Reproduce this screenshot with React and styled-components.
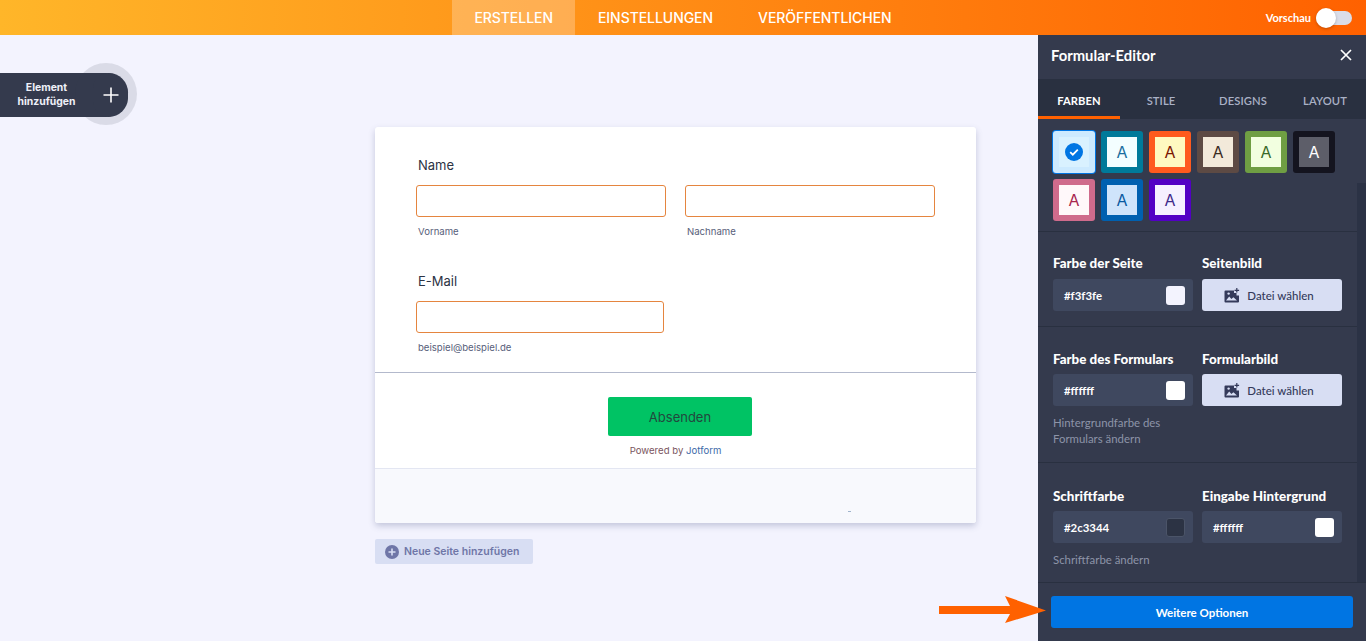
import React from 'react';
import styled, { createGlobalStyle } from 'styled-components';

const GlobalStyle = createGlobalStyle`
  html, body {
    margin: 0;
    padding: 0;
    background: #f3f3fe;
    font-family: "Inter", "Liberation Sans", sans-serif;
  }
  * { box-sizing: border-box; }
`;

const Page = styled.div`
  position: relative;
  width: 1366px;
  height: 641px;
  overflow: hidden;
  display: flex;
  flex-direction: column;
`;

//TOP BAR
const TopBar = styled.header`
  flex: none;
  height: 35px;
  display: grid;
  grid-template-columns: 1fr auto 1fr;
  background: linear-gradient(90deg, #ffb629 0%, #ff6100 100%);
`;
const Nav = styled.nav`
  grid-column: 2;
  display: flex;
`;
const NavTab = styled.a`
  display: flex;
  align-items: center;
  padding: 0 22.5px;
  font-size: 14px;
  font-weight: 500;
  letter-spacing: -0.05px;
  color: #fff;
  background: ${props => props.$active ? 'rgba(255, 255, 255, 0.25)' : 'transparent'};
`;
const PreviewBox = styled.div`
  grid-column: 3;
  justify-self: end;
  display: flex;
  align-items: center;
  gap: 5px;
  padding-right: 14px;
`;
const PreviewLabel = styled.span`
  font-family: "Lato", sans-serif;
  font-size: 11px;
  font-weight: 700;
  color: #fff;
`;
const SwitchTrack = styled.div`
  position: relative;
  width: 36px;
  height: 14px;
  border-radius: 7px;
  background: #dadde8;
`;
const SwitchKnob = styled.div`
  position: absolute;
  left: 0;
  top: -3px;
  width: 20px;
  height: 20px;
  border-radius: 50%;
  background: #fff;
  box-shadow: 0 1px 3px rgba(0, 0, 0, 0.25);
`;

const Main = styled.div`
  flex: 1;
  min-height: 0;
  display: flex;
`;

//CANVAS
const Canvas = styled.main`
  position: relative;
  flex: 1;
  padding: 92px 0 0 375px;
`;
const AddElement = styled.div`
  position: absolute;
  left: 0;
  top: 38px;
  width: 128px;
  height: 44px;
  display: flex;
  border-radius: 0 22px 22px 0;
  background: #343a4d;
`;
const AddLabel = styled.div`
  width: 93px;
  align-self: center;
  text-align: center;
  font-size: 10.4px;
  line-height: 14px;
  font-weight: 700;
  color: #eef0f8;
`;
const AddRing = styled.div`
  position: absolute;
  left: 75px;
  top: -10px;
  width: 62px;
  height: 62px;
  border-radius: 50%;
  background: rgba(52, 58, 77, 0.13);
`;
const AddButton = styled.div`
  position: absolute;
  left: 93px;
  top: 0;
  width: 35px;
  height: 44px;
  display: flex;
  align-items: center;
  justify-content: center;
  border-radius: 18px 22px 22px 18px;
  background: #343a4d;
`;

const FormCard = styled.section`
  width: 601px;
  height: 396px;
  display: flex;
  flex-direction: column;
  border-radius: 3px;
  background: #fff;
  box-shadow: 0 3px 6px rgba(87, 97, 140, 0.3);
`;
const Fields = styled.div`
  height: 246px;
  padding: 29px 0 0 41px;
  border-bottom: 1px solid #b3b9cc;
`;
const FieldLabel = styled.div`
  height: 18px;
  padding-left: 2px;
  font-size: 13px;
  line-height: 18px;
  color: #2c3344;
`;
const FieldRow = styled.div`
  display: flex;
  gap: 19px;
  margin-top: 11px;
  margin-bottom: ${props => props.$last ? '0' : '34px'};
`;
const FieldCol = styled.div`
  width: ${props => props.$width}px;
`;
const TextInput = styled.div`
  height: 32px;
  border: 1px solid #e5853f;
  border-radius: 3px;
  background: #fff;
`;
const SubLabel = styled.div`
  margin-top: 8px;
  padding-left: 2px;
  font-size: 9.6px;
  line-height: 13px;
  color: #57607a;
`;
const SubmitArea = styled.div`
  height: 96px;
  padding-top: 24px;
  display: flex;
  flex-direction: column;
  align-items: center;
  border-bottom: 1px solid #e3e6f2;
`;
const SubmitButton = styled.div`
  width: 144px;
  height: 39px;
  margin-left: 9px;
  display: flex;
  align-items: center;
  justify-content: center;
  border-radius: 2px;
  background: #00c364;
  font-size: 13px;
  color: #22483e;
`;
const Powered = styled.div`
  margin-top: 8px;
  font-size: 9.6px;
  line-height: 13px;
  color: #7a5560;
`;
const PoweredLink = styled.span`
  color: #3e6aa8;
`;
const FormFooter = styled.div`
  position: relative;
  flex: 1;
  border-radius: 0 0 3px 3px;
  background: #f8f9fd;
`;
const Tick = styled.span`
  position: absolute;
  left: 473px;
  top: 42px;
  width: 3px;
  height: 1px;
  background: #a0b4cc;
`;
const NewPage = styled.div`
  width: 158px;
  height: 25px;
  margin-top: 16px;
  display: flex;
  align-items: center;
  gap: 5px;
  padding-left: 10px;
  border-radius: 2px;
  background: #d8def3;
  font-size: 10.5px;
  font-weight: 600;
  color: #6f76a7;
`;

//EDITOR PANEL
const Panel = styled.aside`
  flex: none;
  width: 328px;
  display: flex;
  flex-direction: column;
  background: #343a4d;
  color: #fff;
  font-family: "Lato", "Liberation Sans", sans-serif;
`;
const PanelHead = styled.div`
  flex: none;
  height: 44px;
  display: flex;
  align-items: center;
  justify-content: space-between;
  padding: 0 14px 4px 13px;
  font-size: 14.8px;
  font-weight: 700;
`;
const PanelTabs = styled.div`
  flex: none;
  height: 40px;
  display: grid;
  grid-template-columns: repeat(4, 82px);
  background: #293040;
`;
const PanelTab = styled.div`
  display: flex;
  align-items: center;
  justify-content: center;
  padding-top: 5px;
  font-size: 11.2px;
  font-weight: ${props => props.$active ? 700 : 600};
  letter-spacing: 0.1px;
  color: ${props => props.$active ? '#fff' : '#a9b1c6'};
  border-bottom: 3px solid ${props => props.$active ? '#ff6100' : 'transparent'};
`;
const ScrollArea = styled.div`
  flex: 1;
  min-height: 0;
  display: flex;
  border-bottom: 1px solid #293040;
`;
const Sections = styled.div`
  flex: 1;
`;
const ScrollBar = styled.div`
  flex: none;
  width: 9px;
  background: #2b3245;
`;
const ScrollThumb = styled.div`
  height: 64px;
  background: #343a4d;
`;
const SwatchSection = styled.div`
  height: 113px;
  padding: 12px 0 0 15px;
  display: flex;
  flex-wrap: wrap;
  align-content: flex-start;
  gap: 6px;
  border-bottom: 1px solid #293040;
`;
const Swatch = styled.div`
  width: 42px;
  height: 42px;
  padding: 6px;
  border-radius: 3px;
  background: ${props => props.$frame};
  box-shadow: ${props => props.$selected ? '0 0 0 1px #0075e3' : 'none'};
`;
const SwatchFace = styled.div`
  width: 100%;
  height: 100%;
  display: flex;
  align-items: center;
  justify-content: center;
  background: ${props => props.$face};
  color: ${props => props.$ink};
  font-family: "Inter", sans-serif;
  font-size: 16px;
`;
const OptionLabel = styled.div`
  height: 16px;
  margin-bottom: 8px;
  font-size: 13.4px;
  line-height: 16px;
  font-weight: 900;
  white-space: nowrap;
`;
const Section = styled.div`
  padding: ${props => props.$top || 23}px 15px 15px 15px;
  border-bottom: ${props => props.$last ? 'none' : '1px solid #293040'};

  ${OptionLabel} {
    margin-bottom: ${props => props.$tight ? '7px' : '8px'};
  }
`;
const Grid = styled.div`
  display: grid;
  grid-template-columns: 140px 140px;
  column-gap: 9px;
`;
const ColorField = styled.div`
  height: 32px;
  display: flex;
  align-items: center;
  justify-content: space-between;
  padding: 0 8px 0 11px;
  border-radius: 3px;
  background: #3f485f;
  font-size: 11.4px;
  font-weight: 700;
`;
const ColorChip = styled.span`
  width: 19px;
  height: 19px;
  border-radius: 3px;
  background: ${props => props.$color};
  border: ${props => props.$outlined ? '1px solid #4b5468' : 'none'};
`;
const FileButton = styled.div`
  height: 32px;
  display: flex;
  align-items: center;
  justify-content: center;
  gap: 7px;
  padding-right: 6px;
  border-radius: 3px;
  background: #d8def3;
  font-size: 11.5px;
  font-weight: 500;
  color: #343a5a;
`;
const HelpText = styled.div`
  margin-top: 9px;
  font-size: 11.4px;
  line-height: 16px;
  color: #8d94a8;
`;
const PanelFoot = styled.div`
  flex: none;
  height: 58px;
  padding: 13px 13px 0;
`;
const MoreButton = styled.div`
  height: 32px;
  display: flex;
  align-items: center;
  justify-content: center;
  border-radius: 3px;
  background: #0075e3;
  font-size: 11.5px;
  font-weight: 700;
`;
const Arrow = styled.svg`
  position: absolute;
  left: 939px;
  top: 596px;
`;

const swatches = [
  { frame: '#007a9a', face: '#f3feff', ink: '#1a6ea0' },
  { frame: '#ff5a1e', face: '#fff9c0', ink: '#7a1500' },
  { frame: '#5d4a44', face: '#f2e9da', ink: '#3a2a22' },
  { frame: '#6f9e43', face: '#f2ffe0', ink: '#3a6a2a' },
  { frame: '#14141f', face: '#5d5e69', ink: '#ffffff' },
  { frame: '#cf6b8c', face: '#fff8fa', ink: '#a8254e' },
  { frame: '#0060b0', face: '#cfe4fb', ink: '#0a5aa0' },
  { frame: '#5200c4', face: '#f5f0ff', ink: '#3f2a8a' },
];

const ImageIcon = () => (
  <svg width="16" height="15" viewBox="0 0 16 15">
    <path d="M1.5 2.5H10V5h2.5v2.5H15v6a1 1 0 0 1-1 1H1.5a1 1 0 0 1-1-1v-10a1 1 0 0 1 1-1z" fill="#343a5a" />
    <path d="M2 12.5l3.2-4 2.2 2.4 2-1.6 3.6 3.2z" fill="#d8def3" />
    <circle cx="4.6" cy="5.6" r="1.2" fill="#d8def3" />
    <path d="M12.8 0v4.6M10.5 2.3h4.6" stroke="#343a5a" strokeWidth="1.2" fill="none" />
  </svg>
);

const App = () => (
  <Page>
    <GlobalStyle />
    <TopBar>
      <Nav>
        <NavTab $active>ERSTELLEN</NavTab>
        <NavTab>EINSTELLUNGEN</NavTab>
        <NavTab>VERÖFFENTLICHEN</NavTab>
      </Nav>
      <PreviewBox>
        <PreviewLabel>Vorschau</PreviewLabel>
        <SwitchTrack><SwitchKnob /></SwitchTrack>
      </PreviewBox>
    </TopBar>
    <Main>
      <Canvas>
        <AddElement>
          <AddLabel>Element hinzufügen</AddLabel>
          <AddRing />
          <AddButton>
            <svg width="16" height="16" viewBox="0 0 16 16">
              <path d="M8 .5v15M.5 8h15" stroke="#fff" strokeWidth="1.6" fill="none" />
            </svg>
          </AddButton>
        </AddElement>
        <FormCard>
          <Fields>
            <FieldLabel>Name</FieldLabel>
            <FieldRow>
              <FieldCol $width={250}>
                <TextInput />
                <SubLabel>Vorname</SubLabel>
              </FieldCol>
              <FieldCol $width={250}>
                <TextInput />
                <SubLabel>Nachname</SubLabel>
              </FieldCol>
            </FieldRow>
            <FieldLabel>E-Mail</FieldLabel>
            <FieldRow $last>
              <FieldCol $width={248}>
                <TextInput />
                <SubLabel>beispiel@beispiel.de</SubLabel>
              </FieldCol>
            </FieldRow>
          </Fields>
          <SubmitArea>
            <SubmitButton>Absenden</SubmitButton>
            <Powered>Powered by <PoweredLink>Jotform</PoweredLink></Powered>
          </SubmitArea>
          <FormFooter><Tick /></FormFooter>
        </FormCard>
        <NewPage>
          <svg width="14" height="14" viewBox="0 0 14 14">
            <circle cx="7" cy="7" r="7" fill="#6f76a7" />
            <path d="M7 3.5v7M3.5 7h7" stroke="#d8def3" strokeWidth="1.6" />
          </svg>
          Neue Seite hinzufügen
        </NewPage>
      </Canvas>
      <Panel>
        <PanelHead>
          Formular-Editor
          <svg width="12" height="12" viewBox="0 0 12 12">
            <path d="M1 1l10 10M11 1L1 11" stroke="#fff" strokeWidth="1.7" fill="none" />
          </svg>
        </PanelHead>
        <PanelTabs>
          <PanelTab $active>FARBEN</PanelTab>
          <PanelTab>STILE</PanelTab>
          <PanelTab>DESIGNS</PanelTab>
          <PanelTab>LAYOUT</PanelTab>
        </PanelTabs>
        <ScrollArea>
          <Sections>
            <SwatchSection>
              <Swatch $frame="#cdeaff" $selected>
                <SwatchFace $face="#d9f1ff">
                  <svg width="18" height="18" viewBox="0 0 18 18">
                    <circle cx="9" cy="9" r="9" fill="#0075e3" />
                    <path d="M5.2 9.2l2.6 2.5 5-5" stroke="#fff" strokeWidth="1.8" fill="none" />
                  </svg>
                </SwatchFace>
              </Swatch>
              {swatches.map(s => (
                <Swatch key={s.frame} $frame={s.frame}>
                  <SwatchFace $face={s.face} $ink={s.ink}>A</SwatchFace>
                </Swatch>
              ))}
            </SwatchSection>
            <Section>
              <Grid>
                <OptionLabel>Farbe der Seite</OptionLabel>
                <OptionLabel>Seitenbild</OptionLabel>
                <ColorField>#f3f3fe<ColorChip $color="#f3f3fe" /></ColorField>
                <FileButton><ImageIcon />Datei wählen</FileButton>
              </Grid>
            </Section>
            <Section $top={24} $tight>
              <Grid>
                <OptionLabel>Farbe des Formulars</OptionLabel>
                <OptionLabel>Formularbild</OptionLabel>
                <ColorField>#ffffff<ColorChip $color="#ffffff" /></ColorField>
                <FileButton><ImageIcon />Datei wählen</FileButton>
              </Grid>
              <HelpText>Hintergrundfarbe des<br />Formulars ändern</HelpText>
            </Section>
            <Section $top={25} $tight $last>
              <Grid>
                <OptionLabel>Schriftfarbe</OptionLabel>
                <OptionLabel>Eingabe Hintergrund</OptionLabel>
                <ColorField>#2c3344<ColorChip $color="#2c3344" $outlined /></ColorField>
                <ColorField>#ffffff<ColorChip $color="#ffffff" /></ColorField>
              </Grid>
              <HelpText>Schriftfarbe ändern</HelpText>
            </Section>
          </Sections>
          <ScrollBar><ScrollThumb /></ScrollBar>
        </ScrollArea>
        <PanelFoot>
          <MoreButton>Weitere Optionen</MoreButton>
        </PanelFoot>
      </Panel>
    </Main>
    <Arrow width="107" height="27" viewBox="0 0 107 27">
      <path d="M0 10H71L66 0L107 14.5L66 27L71 18H0z" fill="#ff6100" />
    </Arrow>
  </Page>
);

export default App;
